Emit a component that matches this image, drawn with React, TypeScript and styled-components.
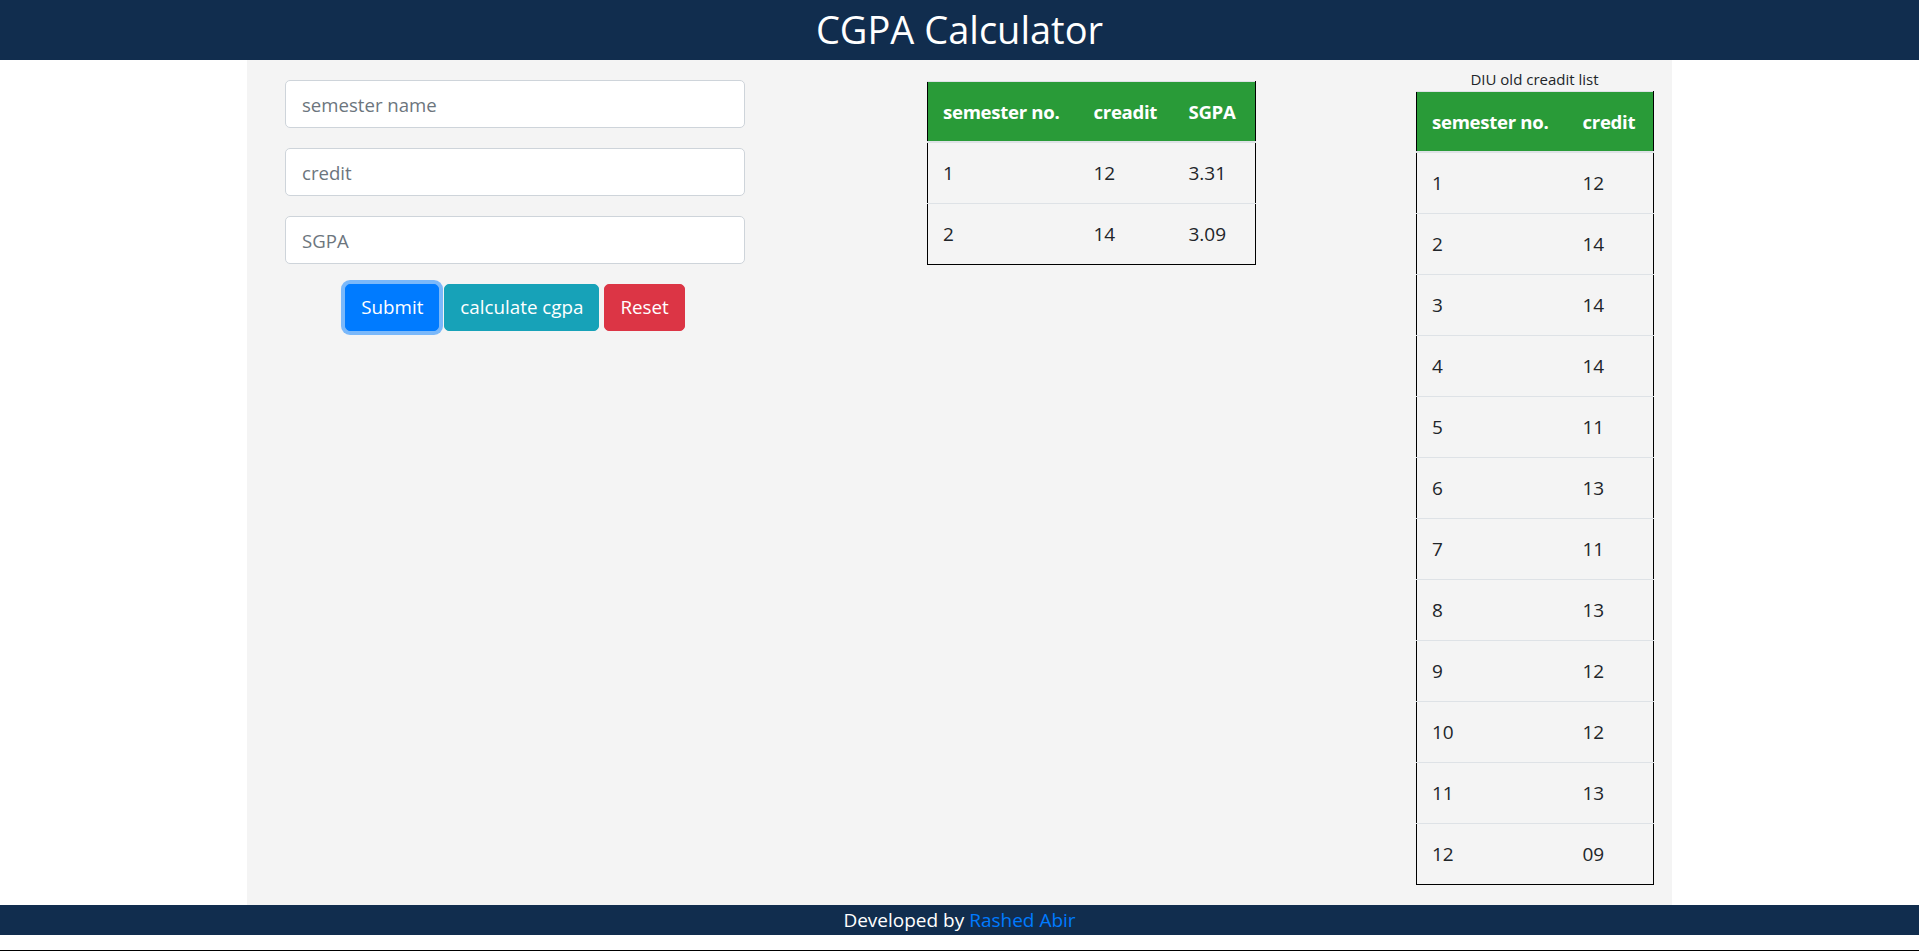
import React from "react";
import styled, { createGlobalStyle } from "styled-components";

const Global = createGlobalStyle`
  html, body { margin: 0; padding: 0; background: #fff; }
  body {
    font-family: "Segoe UI", "Open Sans", "Noto Sans", sans-serif;
    font-size: 19px;
    line-height: 1.5;
    color: #212529;
  }
  * { box-sizing: border-box; }
`;

const Header = styled.header`
  height: 60px;
  background: #112d4e;
  color: #fff;
  display: flex;
  align-items: center;
  justify-content: center;
`;

const Title = styled.h1`
  margin: 0;
  font-size: 38px;
  font-weight: 400;
  line-height: 1.2;
`;

const Panel = styled.main`
  width: 1425px;
  margin: 0 auto;
  background: #f4f4f4;
  padding: 7px 19px 20px 38px;
  display: grid;
  grid-template-columns: 642px 489px 237px;
  align-items: start;
`;

const FormCol = styled.div`
  width: 460px;
  padding-top: 13px;
  display: flex;
  flex-direction: column;
  gap: 20px;
`;

const Input = styled.input`
  display: block;
  width: 100%;
  height: 48px;
  padding: 7px 16px;
  font: inherit;
  font-size: 18.6px;
  color: #495057;
  background: #fff;
  border: 1px solid #ced4da;
  border-radius: 5px;
  outline: none;
  &::placeholder { color: #6c757d; }
`;

const Buttons = styled.div`
  display: flex;
  justify-content: center;
  gap: 5px;
`;

const Button = styled.button<{ $bg: string; $focus?: boolean }>`
  height: 47px;
  padding: 0 15px;
  font: inherit;
  font-size: 18.8px;
  color: #fff;
  background: ${(p) => p.$bg};
  border: 1px solid ${(p) => p.$bg};
  border-radius: 5px;
  cursor: pointer;
  box-shadow: ${(p) => (p.$focus ? "0 0 0 4px rgba(0,123,255,0.5)" : "none")};
`;

const TableCol = styled.div`
  padding-top: 14px;
`;

const SideCol = styled.div`
  display: flex;
  flex-direction: column;
`;

const Caption = styled.div`
  font-size: 15px;
  line-height: 24px;
  text-align: center;
`;

const Table = styled.table<{ $w: number }>`
  width: ${(p) => p.$w}px;
  table-layout: fixed;
  border-collapse: collapse;
  border: 1px solid #000;
  border-top: 1px solid #dee2e6;
`;

const Th = styled.th<{ $w: number }>`
  width: ${(p) => p.$w}px;
  background: #299b38;
  color: #fff;
  font-size: 18.6px;
  font-weight: 700;
  letter-spacing: -0.3px;
  text-align: left;
  padding: 14px 15px;
  line-height: 31px;
  white-space: nowrap;
  border-bottom: 2px solid #dee2e6;
`;

const Td = styled.td`
  padding: 15px 15px;
  line-height: 30px;
  font-size: 19px;
  border-top: 1px solid #dee2e6;
`;

const Footer = styled.footer`
  height: 30px;
  background: #112d4e;
  color: #fff;
  text-align: center;
  font-size: 19px;
  line-height: 30px;
`;

const Link = styled.a`
  color: #007bff;
  text-decoration: none;
`;

const BottomRule = styled.div`
  margin-top: 15px;
  height: 1px;
  background: #000;
`;

const results = [
  ["1", "12", "3.31"],
  ["2", "14", "3.09"],
];

const oldCredits = [
  ["1", "12"],
  ["2", "14"],
  ["3", "14"],
  ["4", "14"],
  ["5", "11"],
  ["6", "13"],
  ["7", "11"],
  ["8", "13"],
  ["9", "12"],
  ["10", "12"],
  ["11", "13"],
  ["12", "09"],
];

export default function App() {
  return (
    <>
      <Global />
      <Header>
        <Title>CGPA Calculator</Title>
      </Header>
      <Panel>
        <FormCol>
          <Input placeholder="semester name" />
          <Input placeholder="credit" />
          <Input placeholder="SGPA" />
          <Buttons>
            <Button $bg="#007bff" $focus>Submit</Button>
            <Button $bg="#17a2b8">calculate cgpa</Button>
            <Button $bg="#dc3545">Reset</Button>
          </Buttons>
        </FormCol>
        <TableCol>
          <Table $w={328}>
            <thead>
              <tr>
                <Th $w={151}>semester no.</Th>
                <Th $w={95}>creadit</Th>
                <Th $w={82}>SGPA</Th>
              </tr>
            </thead>
            <tbody>
              {results.map((r) => (
                <tr key={r[0]}>
                  {r.map((c, i) => (
                    <Td key={i}>{c}</Td>
                  ))}
                </tr>
              ))}
            </tbody>
          </Table>
        </TableCol>
        <SideCol>
          <Caption>DIU old creadit list</Caption>
          <Table $w={237}>
            <thead>
              <tr>
                <Th $w={151}>semester no.</Th>
                <Th $w={86}>credit</Th>
              </tr>
            </thead>
            <tbody>
              {oldCredits.map((r) => (
                <tr key={r[0]}>
                  <Td>{r[0]}</Td>
                  <Td>{r[1]}</Td>
                </tr>
              ))}
            </tbody>
          </Table>
        </SideCol>
      </Panel>
      <Footer>
        Developed by <Link href="#">Rashed Abir</Link>
      </Footer>
      <BottomRule />
    </>
  );
}
